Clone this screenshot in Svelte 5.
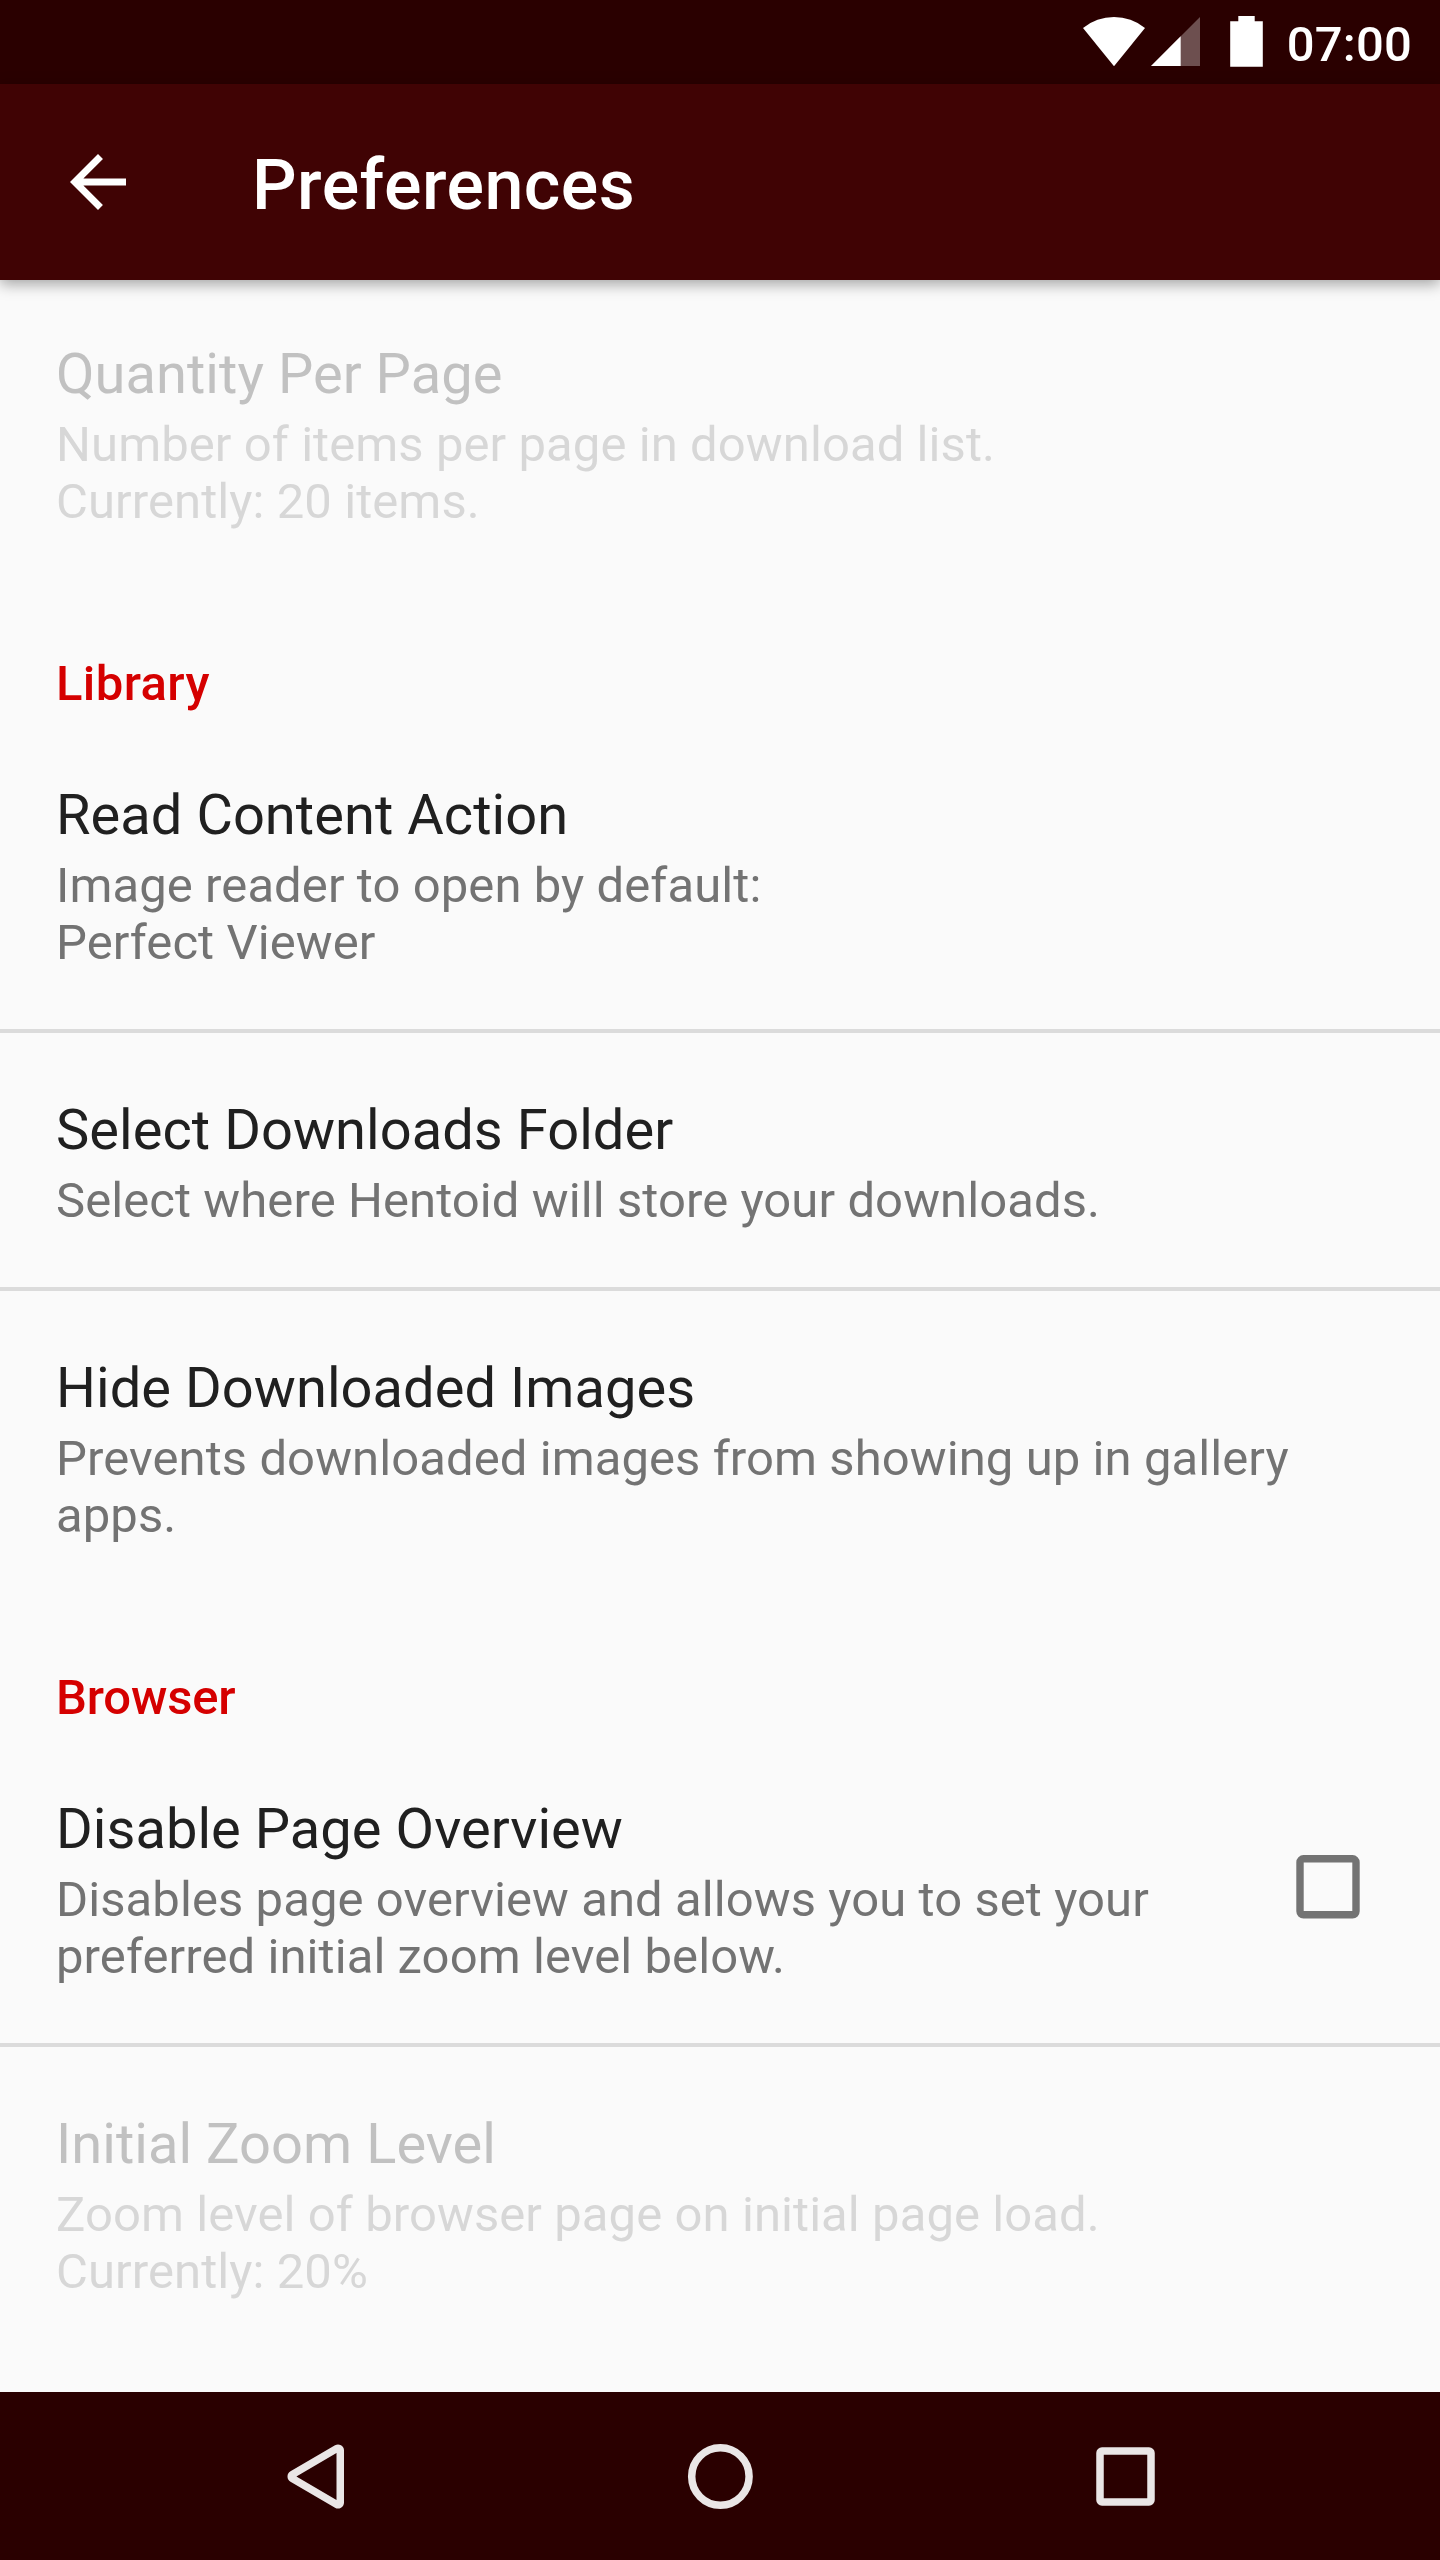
<script>
  const sections = [
    {
      heading: null,
      items: [
        {
          title: 'Quantity Per Page',
          lines: ['Number of items per page in download list.', 'Currently: 20 items.'],
          disabled: true
        }
      ]
    },
    {
      heading: 'Library',
      tracking: 0.4,
      items: [
        { title: 'Read Content Action', lines: ['Image reader to open by default:', 'Perfect Viewer'] },
        { title: 'Select Downloads Folder', lines: ['Select where Hentoid will store your downloads.'] },
        {
          title: 'Hide Downloaded Images',
          lines: ['Prevents downloaded images from showing up in gallery apps.']
        }
      ]
    },
    {
      heading: 'Browser',
      tracking: -0.15,
      items: [
        {
          title: 'Disable Page Overview',
          lines: ['Disables page overview and allows you to set your preferred initial zoom level below.'],
          checkbox: true
        },
        {
          title: 'Initial Zoom Level',
          lines: ['Zoom level of browser page on initial page load.', 'Currently: 20%'],
          disabled: true
        }
      ]
    }
  ];
</script>

<div class="screen">
  <div class="status">
    <svg class="wifi" viewBox="0 0 62 50" aria-hidden="true">
      <path d="M31 49.2L0 11A49.2 49.2 0 0 1 62 11Z" />
    </svg>
    <svg class="signal" viewBox="0 0 49 50" aria-hidden="true">
      <path class="dim" d="M0 49L49 0V49Z" />
      <path d="M0 49L29.7 19.3V49Z" />
    </svg>
    <svg class="battery" viewBox="0 0 33 51" aria-hidden="true">
      <path d="M8.3 0H24.7V5.2H32.8V50.7H.2V5.2H8.3Z" />
    </svg>
    <span class="clock">07:00</span>
  </div>

  <header class="toolbar">
    <svg class="back" viewBox="0 0 24 24" aria-hidden="true">
      <path d="M20 11H7.83l5.59-5.59L12 4l-8 8 8 8 1.41-1.41L7.83 13H20v-2z" />
    </svg>
    <h1>Preferences</h1>
  </header>

  <main>
    {#each sections as section}
      <section>
        {#if section.heading}
          <h2 style:letter-spacing="{section.tracking}px">{section.heading}</h2>
        {/if}
        {#each section.items as item}
          <div class="item" class:disabled={item.disabled}>
            <div class="text">
              <h3>{item.title}</h3>
              {#each item.lines as line}<p>{line}</p>{/each}
            </div>
            {#if item.checkbox}
              <svg class="check" viewBox="0 0 112 84" aria-hidden="true">
                <rect x="28" y="13.8" width="56" height="56" rx="3.5" />
              </svg>
            {/if}
          </div>
        {/each}
      </section>
    {/each}
  </main>

  <nav>
    <svg viewBox="-1 0 72 72" aria-hidden="true">
      <path
        fill-rule="evenodd"
        d="M10.5 31.3L55 5.3A6 6 0 0 1 64 10.5V62.5A6 6 0 0 1 55 67.7L10.5 41.7A6 6 0 0 1 10.5 31.3ZM16.4 36.5L56.5 60V13Z"
      />
    </svg>
    <svg viewBox="0 0 72 72" aria-hidden="true">
      <circle class="line" cx="36.4" cy="36.5" r="28.7" />
    </svg>
    <svg viewBox="0 0 72 72" aria-hidden="true">
      <rect class="line" x="11" y="11" width="51" height="51" rx="2" />
    </svg>
  </nav>
</div>

<style>
  :global(body) {
    margin: 0;
    background: #fafafa;
  }

  .screen {
    display: flex;
    flex-direction: column;
    width: 1440px;
    height: 2560px;
    overflow: hidden;
    background: #fafafa;
    font-family: Roboto, sans-serif;
  }

  svg {
    display: block;
    flex: none;
  }

  h1,
  h2,
  h3,
  p {
    margin: 0;
  }

  .status {
    display: flex;
    flex: none;
    align-items: flex-start;
    justify-content: flex-end;
    box-sizing: border-box;
    height: 84px;
    padding-right: 28px;
    background: #2a0000;
    color: #fff;
    fill: #fff;
  }

  .wifi {
    width: 62px;
    height: 50px;
    margin: 17px 6px 0 0;
  }

  .signal {
    width: 49px;
    height: 50px;
    margin: 17px 30px 0 0;
  }

  .dim {
    fill: #6d4f4f;
  }

  .battery {
    width: 33px;
    height: 51px;
    margin: 16px 24px 0 0;
  }

  .clock {
    margin-top: 16px;
    font-size: 49px;
    font-weight: 500;
    line-height: 57px;
    letter-spacing: 0.2px;
  }

  .toolbar {
    position: relative;
    z-index: 1;
    display: flex;
    flex: none;
    align-items: center;
    gap: 112px;
    height: 196px;
    padding-left: 56px;
    background: #400304;
    color: #fff;
    box-shadow: 0 4px 14px rgba(0, 0, 0, 0.36);
  }

  .back {
    width: 84px;
    height: 84px;
    fill: #fff;
  }

  h1 {
    padding-top: 6px;
    font-size: 70px;
    font-weight: 500;
    line-height: 82px;
    letter-spacing: 0.45px;
  }

  main {
    flex: 1;
    min-height: 0;
    margin-top: -3px;
  }

  h2 {
    padding: 67px 56px 6px;
    color: #d50000;
    font-size: 49px;
    font-weight: 500;
    line-height: 57px;
  }

  .item {
    display: flex;
    align-items: center;
    padding: 64px 56px 58px;
    color: #202020;
  }

  .item + .item {
    border-top: 4px solid #dbdbdb;
  }

  .text {
    flex: 1;
  }

  h3 {
    margin-bottom: 9px;
    font-size: 56px;
    font-weight: 400;
    line-height: 66px;
    letter-spacing: 0.05px;
  }

  p {
    color: #737373;
    font-size: 49px;
    line-height: 57px;
    letter-spacing: 0.08px;
  }

  .disabled {
    color: #c1c1c1;
  }

  .disabled p {
    color: #d7d7d7;
  }

  .check {
    width: 112px;
    height: 84px;
    margin-left: 56px;
    margin-top: -7px;
    fill: none;
    stroke: #737373;
    stroke-width: 7.4px;
  }

  nav {
    display: grid;
    flex: none;
    grid-template-columns: repeat(3, 405px);
    align-items: center;
    justify-content: center;
    justify-items: center;
    height: 168px;
    background: #2a0000;
  }

  nav svg {
    width: 72px;
    height: 72px;
    fill: #eae6e6;
  }

  nav .line {
    fill: none;
    stroke: #eae6e6;
    stroke-width: 7.5px;
  }
</style>
